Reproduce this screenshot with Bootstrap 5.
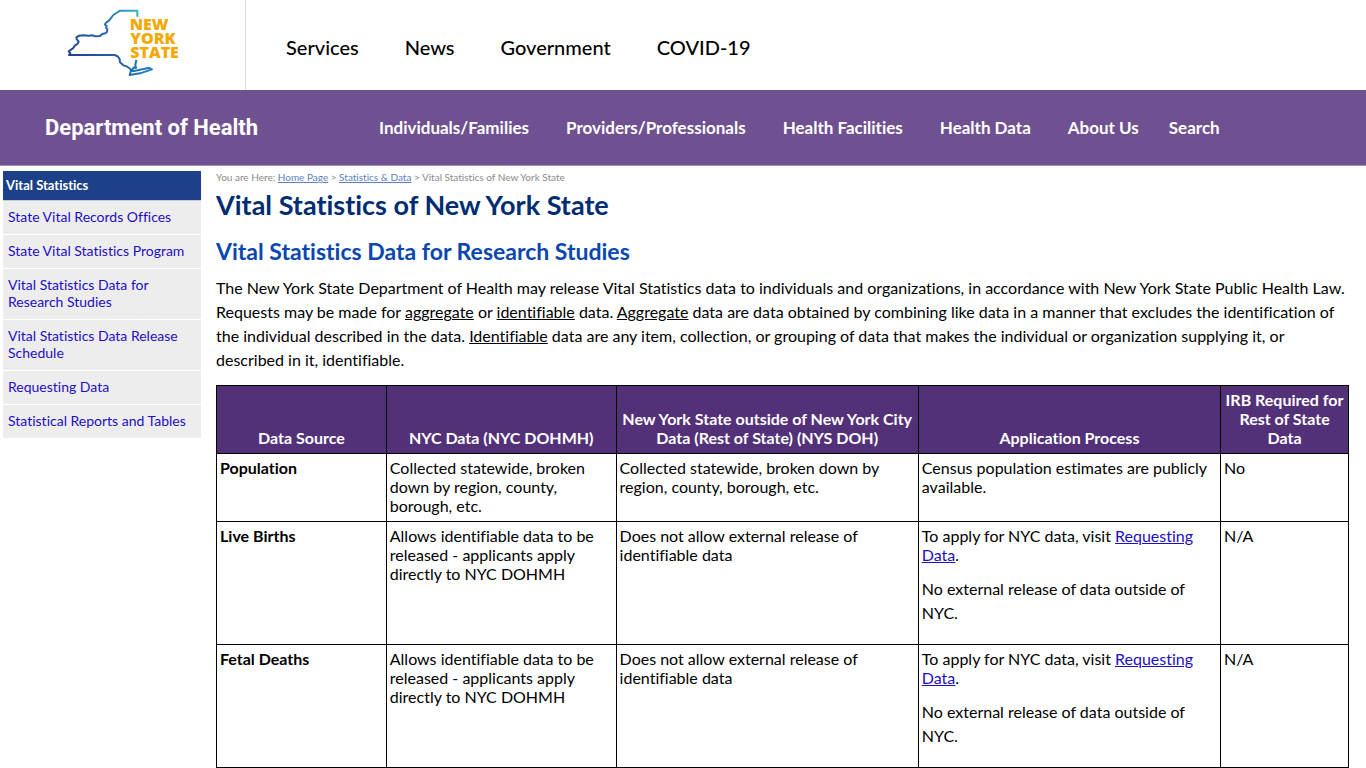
<!DOCTYPE html>
<html lang="en">
<head>
<meta charset="utf-8">
<meta name="viewport" content="width=device-width, initial-scale=1">
<title>Vital Statistics of New York State</title>
<link href="https://cdn.jsdelivr.net/npm/bootstrap@5.3.0/dist/css/bootstrap.min.css" rel="stylesheet">
<style>
  body { font-family: Lato, "Liberation Sans", sans-serif; font-size: 16px; font-variant-ligatures: none; color: #000; background: #fff; }
  a { color: #1d0ec4; }

  .ny-top { min-height: 90px; }
  .ny-logo { width: 246px; padding: 9px 0 0 67px; border-right: 1px solid #ddd; }
  .ny-logo text { font-family: "Open Sans", sans-serif; font-weight: 800; font-size: 48px; fill: #f2a900; }
  .ny-links { gap: 46px; padding: 4px 0 0 40px; }
  .ny-links a { color: #000; font-size: 20px; font-weight: 500; line-height: 24px; text-decoration: none; }

  .doh-bar { min-height: 76px; background: #6f5091; border-bottom: 1px solid #a48fb8; padding-left: 45px; }
  .doh-name { width: 334px; font-family: Roboto, sans-serif; font-size: 22px; line-height: 26px; font-weight: 700; color: #fff; text-decoration: none; }
  .doh-links { gap: 30px; }
  .doh-links a { color: #fff; font-size: 17px; line-height: 20px; font-weight: 700; text-decoration: none; white-space: nowrap; }
  .doh-links a:not(:nth-last-child(-n+2)) { margin-right: 7px; }

  .doh-side { width: 198px; margin: 5px 0 0 3px; }
  .doh-side h2 { background: #1c4188; color: #fff; font-size: 13px; line-height: 17px; font-weight: 700; padding: 6px 3px; border-bottom: 1px solid #c8cbd2; }
  .doh-side .list-group-item { background: #ededed; color: #1d0ec4; border: 0; border-bottom: 1px solid #fff; font-size: 14px; line-height: 17px; padding: 7px 5px 9px; }

  .doh-main { padding: 5px 17px 24px 15px; min-width: 0; }
  .doh-crumbs { font-size: 10px; line-height: 12px; color: #8a8a8a; margin-bottom: 6px; }
  .doh-crumbs a { color: #5b80bd; }
  .doh-main h1 { font-size: 27px; line-height: 32px; font-weight: 700; color: #002d72; margin-bottom: 16px; }
  .doh-main h2 { font-size: 23px; line-height: 28px; font-weight: 700; color: #0a47ae; margin-bottom: 11px; }
  .doh-main p { line-height: 24px; margin-bottom: 13px; }

  .doh-data { color: #000; border-color: #000; line-height: 19px; table-layout: fixed; margin: 0; }
  .doh-data > :not(caption) > * > * { padding: 4px 3px 6px; border-color: #000; }
  .doh-data thead th { background: #533178; color: #fff; text-align: center; vertical-align: bottom; }
  .doh-data td p { margin: 13px 0; }
  .c-source { width: 15%; }
  .c-nyc { width: 20.3%; }
  .c-ros, .c-app { width: 26.7%; }
</style>
</head>
<body>
<header>
  <div class="ny-top d-flex">
    <a class="ny-logo d-block flex-shrink-0" href="#" aria-label="New York State">
      <svg class="d-block" width="112" height="68" viewBox="21 15 336 204">
        <defs>
          <linearGradient id="coast" gradientUnits="userSpaceOnUse" x1="30" y1="160" x2="235" y2="20">
            <stop offset="0" stop-color="#22418f"/>
            <stop offset=".55" stop-color="#2466b0"/>
            <stop offset="1" stop-color="#30b5cf"/>
          </linearGradient>
          <linearGradient id="island" gradientUnits="userSpaceOnUse" x1="160" y1="150" x2="275" y2="200">
            <stop offset="0" stop-color="#22549f"/>
            <stop offset="1" stop-color="#1d86c0"/>
          </linearGradient>
        </defs>
        <g fill="none" stroke-width="6" stroke-linejoin="round">
          <path stroke="url(#coast)" d="M232 38V20H180L160 33 147 50 137 57 135 62 140 66 138 71 142 75 141 84 136 88 127 90 120 96 105 97 98 94 85 95 70 94 57 95 49 101 51 107 56 113 52 120 44 125 40 132 26 142 31 147 27 153H165"/>
          <path stroke="url(#island)" d="M164 153 173 157 179 165 180 175 190 184 202 188 211 195 213 200 209 213 240 208 276 196 268 192 250 195 262 193 222 201 214 200 222 190 228 192 226 182 229 168"/>
        </g>
        <text x="209" y="78">NEW</text>
        <text x="211" y="120">YORK</text>
        <text x="211" y="163">STATE</text>
      </svg>
    </a>
    <nav class="ny-links d-flex align-items-center" aria-label="New York State">
      <a href="#">Services</a>
      <a href="#">News</a>
      <a href="#">Government</a>
      <a href="#">COVID-19</a>
    </nav>
  </div>
  <div class="doh-bar d-flex align-items-center">
    <a class="doh-name flex-shrink-0" href="#">Department of Health</a>
    <nav class="doh-links d-flex align-items-center" aria-label="Department of Health">
      <a href="#">Individuals/Families</a>
      <a href="#">Providers/Professionals</a>
      <a href="#">Health Facilities</a>
      <a href="#">Health Data</a>
      <a href="#">About Us</a>
      <a href="#">Search</a>
    </nav>
  </div>
</header>

<div class="d-flex align-items-start">
  <aside class="doh-side flex-shrink-0">
    <h2 class="m-0">Vital Statistics</h2>
    <nav class="list-group list-group-flush rounded-0" aria-label="Vital Statistics">
      <a class="list-group-item" href="#">State Vital Records Offices</a>
      <a class="list-group-item" href="#">State Vital Statistics Program</a>
      <a class="list-group-item" href="#">Vital Statistics Data for Research Studies</a>
      <a class="list-group-item" href="#">Vital Statistics Data Release Schedule</a>
      <a class="list-group-item" href="#">Requesting Data</a>
      <a class="list-group-item" href="#">Statistical Reports and Tables</a>
    </nav>
  </aside>

  <main class="doh-main flex-grow-1">
    <div class="doh-crumbs">You are Here: <a href="#">Home Page</a> &gt; <a href="#">Statistics &amp; Data</a> &gt; Vital Statistics of New York State</div>
    <h1>Vital Statistics of New York State</h1>
    <h2>Vital Statistics Data for Research Studies</h2>
    <p>The New York State Department of Health may release Vital Statistics data to individuals and organizations, in accordance with New York State Public Health Law. Requests may be made for <u>aggregate</u> or <u>identifiable</u> data. <u>Aggregate</u> data are data obtained by combining like data in a manner that excludes the identification of the individual described in the data. <u>Identifiable</u> data are any item, collection, or grouping of data that makes the individual or organization supplying it, or described in it, identifiable.</p>
    <table class="doh-data table table-bordered">
      <thead>
        <tr>
          <th class="c-source" scope="col">Data Source</th>
          <th class="c-nyc" scope="col">NYC Data (NYC DOHMH)</th>
          <th class="c-ros" scope="col">New York State outside of New York City Data (Rest of State) (NYS DOH)</th>
          <th class="c-app" scope="col">Application Process</th>
          <th scope="col">IRB Required for Rest of State Data</th>
        </tr>
      </thead>
      <tbody>
        <tr>
          <th scope="row">Population</th>
          <td>Collected statewide, broken down by region, county, borough, etc.</td>
          <td>Collected statewide, broken down by region, county, borough, etc.</td>
          <td>Census population estimates are publicly available.</td>
          <td>No</td>
        </tr>
        <tr>
          <th scope="row">Live Births</th>
          <td>Allows identifiable data to be released - applicants apply directly to NYC DOHMH</td>
          <td>Does not allow external release of identifiable data</td>
          <td>To apply for NYC data, visit <a href="#">Requesting Data</a>.<p>No external release of data outside of NYC.</p></td>
          <td>N/A</td>
        </tr>
        <tr>
          <th scope="row">Fetal Deaths</th>
          <td>Allows identifiable data to be released - applicants apply directly to NYC DOHMH</td>
          <td>Does not allow external release of identifiable data</td>
          <td>To apply for NYC data, visit <a href="#">Requesting Data</a>.<p>No external release of data outside of NYC.</p></td>
          <td>N/A</td>
        </tr>
      </tbody>
    </table>
  </main>
</div>
<script src="https://cdn.jsdelivr.net/npm/bootstrap@5.3.0/dist/js/bootstrap.bundle.min.js"></script>
</body>
</html>
